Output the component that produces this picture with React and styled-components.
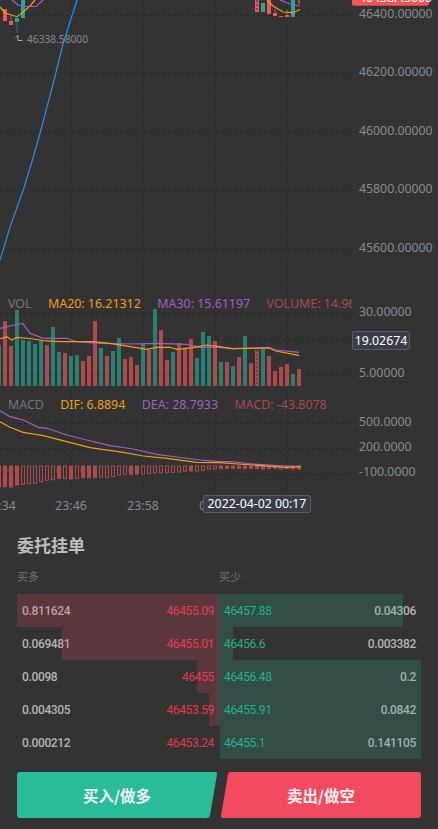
import styled, { createGlobalStyle } from "styled-components";

const GlobalStyle = createGlobalStyle`
  html, body {
    margin: 0;
    padding: 0;
    background: #333333;
  }
  body {
    font-family: "Noto Sans", "Open Sans", sans-serif;
  }
`;

//---------CHART DATA--------------

const GRID = "#282828";
const TICK = "#868b93";
const UP = "#2a7f72";
const DOWN = "#ad4a4b";
const ORANGE = "#f39c12";
const PURPLE = "#a060c4";

// volume bars: [top y, colour]
const volTops = [
  [165, "g"], [93, "r"], [168, "r"], [60, "g"], [150, "g"], [153, "g"], [162, "g"], [153, "g"],
  [165, "r"], [111, "g"], [186, "g"], [189, "r"], [198, "g"], [195, "g"], [213, "r"], [198, "r"],
  [93, "r"], [174, "g"], [198, "r"], [183, "g"], [144, "g"], [207, "r"], [201, "r"], [225, "r"],
  [159, "g"], [180, "r"], [57, "g"], [120, "r"], [210, "r"], [186, "g"], [159, "r"], [177, "r"],
  [147, "r"], [204, "g"], [126, "g"], [138, "g"], [153, "r"], [216, "g"], [216, "r"], [228, "g"],
  [201, "r"], [138, "g"], [219, "r"], [180, "r"], [177, "g"], [198, "r"], [243, "r"], [231, "r"],
  [222, "r"], [252, "g"], [237, "r"],
];

const volPurple = [
  [0, 115], [30, 108], [68, 100], [90, 130], [130, 145], [200, 145], [230, 155], [300, 160],
  [400, 162], [470, 160], [560, 163], [600, 172], [657, 172], [697, 176], [807, 172], [827, 180], [897, 187],
];
const volOrange = [
  [0, 147], [20, 140], [35, 150], [50, 142], [100, 147], [130, 152], [180, 155], [280, 155],
  [330, 160], [390, 170], [440, 178], [470, 172], [510, 172], [530, 178], [580, 173], [620, 165],
  [657, 170], [697, 176], [807, 174], [827, 183], [897, 196],
];

const macdPurple = [
  [0, 47], [30, 65], [70, 75], [115, 97], [140, 100], [200, 120], [260, 135], [330, 152], [400, 162],
  [470, 178], [530, 186], [600, 195], [657, 200], [697, 200], [757, 207], [857, 213], [902, 215],
];
const macdOrange = [
  [0, 80], [30, 97], [70, 112], [130, 122], [200, 140], [270, 158], [370, 172], [430, 183], [500, 190],
  [590, 202], [657, 203], [757, 210], [857, 217], [902, 215],
];

// histogram bars: [bottom y, filled]
const macdBars = [
  [275, 1], [275, 1], [276, 1], [270, 1], [268, 0], [266, 0], [265, 0], [260, 0], [256, 0], [254, 0],
  [250, 1], [250, 0], [252, 1], [250, 0], [248, 1], [248, 1], [248, 1], [247, 0], [247, 0], [245, 0],
  [240, 0], [238, 0], [238, 1], [237, 1], [238, 0], [236, 0], [234, 0], [234, 0], [232, 0], [232, 0],
  [231, 0], [229, 0], [228, 1], [228, 0], [226, 0], [222, 0], [222, 0], [221, 1], [220, 1], [220, 1],
  [220, 1], [220, 1], [220, 1], [221, 1], [222, 1], [220, 1], [220, 1], [222, 0], [221, 1], [222, 1], [222, 1],
];

// candles: [x, top, height, colour]
const candles = [
  [3, 9, 12, "#f25555"], [9, 21, 4, "#f25555"], [15, 18, 4, "#26a69a"], [21, -2, 20, "#26a69a"],
  [255, -2, 14, "#f25555"], [261, 3, 9, "#26a69a"], [267, -2, 16, "#f25555"], [273, 13, 3, "#f25555"],
  [279, 16, 1, "#f25555"], [285, 15, 2, "#f25555"], [291, -2, 19, "#26a69a"], [298, -2, 6, "#a84a4a"],
];

const zoomPoints = (points, originY) =>
  points.map(([x, y]) => `${(x / 3).toFixed(1)},${(originY + y / 3).toFixed(1)}`).join(" ");

const barX = (i) => 5 + i * 6 - 6;

//---------CHART--------------

const PriceChart = () => (
  <ChartSvg viewBox="0 0 438 525" width="438" height="525">
    {[71.5, 143.5, 215.5, 287.5].map((x) => (
      <line key={x} x1={x} y1="0" x2={x} y2="490" stroke={GRID} strokeDasharray="3 3" />
    ))}
    {[15.5, 73.5, 132.5, 190.5, 249.5, 313.5, 339.5, 374.5, 423.5, 448.5, 474.5].map((y) => (
      <line key={y} x1="0" y1={y} x2="350" y2={y} stroke={GRID} strokeDasharray="3 3" />
    ))}

    <polyline
      points="77,0 63.3,43 53.3,83 41.7,127 33.3,157 23.3,190 10,227 0,260"
      fill="none"
      stroke="#2190e8"
      strokeWidth="1.2"
    />

    {candles.map(([x, y, h, color]) => (
      <rect key={x} x={x} y={y} width={x === 298 ? 2 : 4} height={h} fill={color} />
    ))}
    <line x1="17" y1="22" x2="17" y2="33" stroke="#1f6f66" strokeWidth="1.2" />
    <line x1="11" y1="15" x2="11" y2="21" stroke="#a84a4a" strokeWidth="1.2" />
    <line x1="287" y1="9" x2="287" y2="15" stroke="#a84a4a" strokeWidth="1.2" />
    <line x1="275" y1="9" x2="275" y2="13" stroke="#a84a4a" strokeWidth="1.2" />
    <line x1="257" y1="0" x2="257" y2="12" stroke="#333333" strokeDasharray="2 2" />

    <polyline points="0,7 5,13 17,16.7 22,13 30,6 35,0" fill="none" stroke={ORANGE} strokeWidth="1.2" />
    <polyline points="12,0 18,5 25,6.5 36,6.5 43,0" fill="none" stroke={PURPLE} strokeWidth="1.2" />
    <polyline points="267,0 273,6 283,12 293,12.7 300,9.5" fill="none" stroke={ORANGE} strokeWidth="1.2" />
    <polyline points="280,0 290,4 300,6" fill="none" stroke={PURPLE} strokeWidth="1.2" />

    <path d="M15.5 37.5 L18 35.5 L18 40.5 H22.5" fill="none" stroke="#a5a9af" strokeWidth="1" />
    <AxisText x="27" y="43" fontSize="10.2">46338.58000</AxisText>

    <rect x="352" y="-15" width="77" height="20.7" rx="2" fill="#f25555" />
    <text x="359" y="2" fontSize="12.2" fill="#ffffff">46438.45000</text>

    {volTops.map(([top, side], i) => (
      <rect
        key={i}
        x={barX(i) - 2}
        y={290 + top / 3}
        width="4"
        height={96 - top / 3}
        fill={side === "g" ? UP : DOWN}
      />
    ))}
    <line x1="257" y1="350" x2="257" y2="386" stroke="#333333" strokeDasharray="2 2" />
    <polyline points={zoomPoints(volPurple, 290)} fill="none" stroke={PURPLE} strokeWidth="1.2" />
    <polyline points={zoomPoints(volOrange, 290)} fill="none" stroke={ORANGE} strokeWidth="1.2" />

    {macdBars.map(([bottom, filled], i) => (
      <rect
        key={i}
        x={barX(i) - 1.5}
        y="466"
        width="3"
        height={395 + bottom / 3 - 466}
        fill={filled ? DOWN : "none"}
        stroke={DOWN}
        strokeWidth="1"
      />
    ))}
    <polyline points={zoomPoints(macdPurple, 395)} fill="none" stroke={PURPLE} strokeWidth="1.2" />
    <polyline points={zoomPoints(macdOrange, 395)} fill="none" stroke={ORANGE} strokeWidth="1.2" />

    {[
      ["46400.00000", 18],
      ["46200.00000", 76],
      ["46000.00000", 135],
      ["45800.00000", 193],
      ["45600.00000", 252],
      ["30.00000", 316],
      ["5.00000", 377],
      ["500.0000", 426],
      ["200.0000", 451],
      ["-100.0000", 476],
    ].map(([label, y]) => (
      <AxisText key={label} x="359" y={y} fontSize="12.3">
        {label}
      </AxisText>
    ))}
    {[
      ["23:34", 0],
      ["23:46", 71],
      ["23:58", 143],
      ["00:10", 215],
    ].map(([label, x]) => (
      <AxisText key={label} x={x} y="510" fontSize="12.3" textAnchor="middle">
        {label}
      </AxisText>
    ))}
  </ChartSvg>
);

//---------ORDER BOOK--------------

const bids = [
  { qty: "0.811624", price: "46455.09", depth: 202 },
  { qty: "0.069481", price: "46455.01", depth: 157 },
  { qty: "0.0098", price: "46455", depth: 22 },
  { qty: "0.004305", price: "46453.59", depth: 10 },
  { qty: "0.000212", price: "46453.24", depth: 0 },
];

const asks = [
  { qty: "0.04306", price: "46457.88", depth: 184 },
  { qty: "0.003382", price: "46456.6", depth: 14 },
  { qty: "0.2", price: "46456.48", depth: 202 },
  { qty: "0.0842", price: "46455.91", depth: 202 },
  { qty: "0.141105", price: "46455.1", depth: 202, offset: 1 },
];

export default function App() {
  return (
    <Page>
      <GlobalStyle />
      <ChartPanel>
        <PriceChart />
        <Legend $top={295}>
          <LegendItem $color="#6f7580">VOL</LegendItem>
          <LegendItem $color="#f39c12">MA20: 16.21312</LegendItem>
          <LegendItem $color="#a060c4">MA30: 15.61197</LegendItem>
          <LegendItem $color="#a84a4a">VOLUME: 14.96512</LegendItem>
        </Legend>
        <Legend $top={396}>
          <LegendItem $color="#6f7580">MACD</LegendItem>
          <LegendItem $color="#f39c12">DIF: 6.8894</LegendItem>
          <LegendItem $color="#a060c4">DEA: 28.7933</LegendItem>
          <LegendItem $color="#a84a4a">MACD: -43.8078</LegendItem>
        </Legend>
        <ValueTag>19.02674</ValueTag>
        <TimeTag>2022-04-02 00:17</TimeTag>
      </ChartPanel>

      <OrderSection>
        <Title>委托挂单</Title>
        <Columns>
          <ColumnLabel>买多</ColumnLabel>
          <ColumnLabel>买少</ColumnLabel>
        </Columns>
        <Book>
          <div>
            {bids.map((row) => (
              <Row key={row.price}>
                <Qty>{row.qty}</Qty>
                <Price $side="bid">{row.price}</Price>
                <DepthBar $side="bid" style={{ width: row.depth }} />
              </Row>
            ))}
          </div>
          <div>
            {asks.map((row) => (
              <Row key={row.price}>
                <Price $side="ask">{row.price}</Price>
                <Qty>{row.qty}</Qty>
                <DepthBar $side="ask" $offset={row.offset} style={{ width: row.depth - (row.offset || 0) }} />
              </Row>
            ))}
          </div>
        </Book>
        <Actions>
          <BuyButton>买入/做多</BuyButton>
          <SellButton>卖出/做空</SellButton>
        </Actions>
      </OrderSection>
    </Page>
  );
}

//---------STYLING--------------

const Page = styled.div`
  width: 438px;
  height: 829px;
  overflow: hidden;
  background: #333333;
`;

const ChartPanel = styled.div`
  position: relative;
  height: 525px;
  overflow: hidden;
`;

const ChartSvg = styled.svg`
  display: block;
  font-family: "Noto Sans", "Open Sans", sans-serif;
`;

const AxisText = styled.text`
  fill: ${TICK};
`;

const Legend = styled.div`
  position: absolute;
  top: ${(p) => p.$top}px;
  left: 8px;
  width: 344px;
  display: flex;
  gap: 16.5px;
  overflow: hidden;
  white-space: nowrap;
  font-size: 12.4px;
  line-height: 18px;
`;

const LegendItem = styled.span`
  color: ${(p) => p.$color};
`;

const Tag = styled.div`
  position: absolute;
  box-sizing: border-box;
  background: #3a3d47;
  border: 1px solid #565b67;
  border-radius: 2px;
  color: #ffffff;
  font-size: 12.3px;
  text-align: center;
  white-space: nowrap;
`;

const ValueTag = styled(Tag)`
  left: 352px;
  top: 331px;
  width: 58px;
  height: 19px;
  line-height: 17px;
`;

const TimeTag = styled(Tag)`
  left: 203px;
  top: 495px;
  width: 108px;
  height: 18px;
  line-height: 16px;
`;

const OrderSection = styled.section`
  padding: 8px 17px 0;
  font-family: "Noto Sans CJK SC", sans-serif;
`;

const Title = styled.h2`
  margin: 0;
  font-size: 17px;
  font-weight: 700;
  line-height: 24px;
  color: #bdbdbd;
`;

const Columns = styled.div`
  display: grid;
  grid-template-columns: 1fr 1fr;
  margin-top: 12px;
`;

const ColumnLabel = styled.span`
  font-size: 11px;
  font-weight: 500;
  line-height: 14px;
  color: #666666;
`;

const Book = styled.div`
  display: grid;
  grid-template-columns: 202px 202px;
  margin-top: 11px;
`;

const Row = styled.div`
  position: relative;
  display: flex;
  justify-content: space-between;
  align-items: center;
  height: 33px;
  padding: 0 5px;
  font-family: Roboto, "Liberation Sans", sans-serif;
  font-size: 12px;
  font-weight: 500;
  letter-spacing: -0.35px;
`;

const Qty = styled.span`
  color: #b4b4b4;
`;

const Price = styled.span`
  color: ${(p) => (p.$side === "bid" ? "#e2394c" : "#25b08c")};
  font-weight: 400;
`;

const DepthBar = styled.div`
  position: absolute;
  top: 0;
  bottom: 0;
  ${(p) => (p.$side === "bid" ? "right: 0;" : `left: ${p.$offset || 0}px;`)}
  background: ${(p) => (p.$side === "bid" ? "rgba(243, 74, 95, 0.2)" : "rgba(42, 187, 152, 0.2)")};
`;

const Actions = styled.div`
  display: flex;
  gap: 4px;
  margin-top: 13px;
`;

const ActionButton = styled.button`
  width: 200px;
  height: 46px;
  padding: 0;
  border: 0;
  color: #f0f0f0;
  font-family: "Noto Sans CJK SC", sans-serif;
  font-size: 15.5px;
  font-weight: 700;
`;

const BuyButton = styled(ActionButton)`
  background: #2abb98;
  clip-path: path("M3 0 H198 Q200.4 0 200 2.4 L193 43.6 Q192.6 46 190 46 H3 Q0 46 0 43 V3 Q0 0 3 0 Z");
`;

const SellButton = styled(ActionButton)`
  background: #f34a5f;
  clip-path: path("M10 0 H197 Q200 0 200 3 V43 Q200 46 197 46 H2 Q-0.4 46 0 43.6 L7 2.4 Q7.4 0 10 0 Z");
`;
